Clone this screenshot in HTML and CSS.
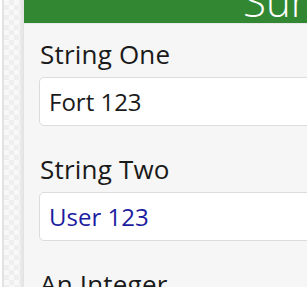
FILE: index.html
```html
<!DOCTYPE html>
<html lang="en">
<head>
    <meta charset="UTF-8">
    <meta name="viewport" content="width=device-width, initial-scale=1.0">
    <title>Survey</title>
    <link rel="stylesheet" href="styles.css">
</head>
<body>
    <div class="page">
        <!-- Left rail behind the survey panel -->
        <div class="rail">
            <div class="rail-line"></div>
            <div class="rail-checker"></div>
            <div class="rail-shade"></div>
        </div>

        <!-- Survey panel -->
        <div class="panel">
            <div class="panel-header">
                <h1 class="panel-title">Survey</h1>
            </div>

            <form class="survey-form">
                <div class="field">
                    <label class="field-label" for="stringOne">String One</label>
                    <input class="field-input" type="text" id="stringOne" value="Fort 123">
                </div>

                <div class="field">
                    <label class="field-label" for="stringTwo">String Two</label>
                    <input class="field-input field-input-blue" type="text" id="stringTwo" value="User 123">
                </div>

                <div class="field">
                    <label class="field-label" for="anInteger">An Integer</label>
                    <input class="field-input" type="number" id="anInteger">
                </div>
            </form>
        </div>
    </div>
</body>
</html>
```

FILE: styles.css
```css
/* Global Styles */
html, body {
    margin: 0;
    padding: 0;
    overflow: hidden;
}

body {
    font-family: 'Open Sans', 'Noto Sans', sans-serif;
    color: #1a1a1a;
    background-color: #ffffff;
}

.page {
    display: flex;
    width: 460px;
    height: 287px;
    overflow: hidden;
}

/* Left rail */
.rail {
    display: flex;
    width: 24px;
    flex-shrink: 0;
    padding-left: 2px;
    box-sizing: border-box;
}

.rail-line {
    width: 2px;
    background-color: #e2e2e2;
}

.rail-checker {
    width: 16px;
    background-color: #f8f8f8;
    background-image:
        linear-gradient(45deg, #efefef 25%, transparent 25%, transparent 75%, #efefef 75%),
        linear-gradient(45deg, #efefef 25%, transparent 25%, transparent 75%, #efefef 75%);
    background-size: 10px 10px;
    background-position: 0 0, 5px 5px;
}

.rail-shade {
    width: 4px;
    background: linear-gradient(to right, #ececec, #e2e2e2);
}

/* Panel */
.panel {
    flex: 1;
    background-color: #f5f6f5;
}

.panel-header {
    height: 23px;
    overflow: hidden;
    background-color: #328832;
    border-bottom: 1px solid #e8e8e8;
}

.panel-title {
    margin: -20px 0 0 219px;
    font-size: 42px;
    font-weight: 300;
    line-height: 42px;
    color: #ffffff;
}

/* Form */
.survey-form {
    padding: 13px 0 0 15px;
}

.field {
    margin-bottom: 26px;
}

.field-label {
    display: block;
    font-size: 26px;
    line-height: 34px;
    margin-bottom: 6px;
    padding-left: 1px;
    letter-spacing: 0.2px;
}

.field-input {
    display: block;
    width: 100%;
    height: 49px;
    box-sizing: border-box;
    padding: 0 9px;
    border: 1px solid #dcdcdc;
    border-radius: 5px;
    background-color: #ffffff;
    font-family: inherit;
    font-size: 24px;
    color: #1a1a1a;
    outline: none;
}

.field-input-blue {
    color: #1c1ca0;
}
```
